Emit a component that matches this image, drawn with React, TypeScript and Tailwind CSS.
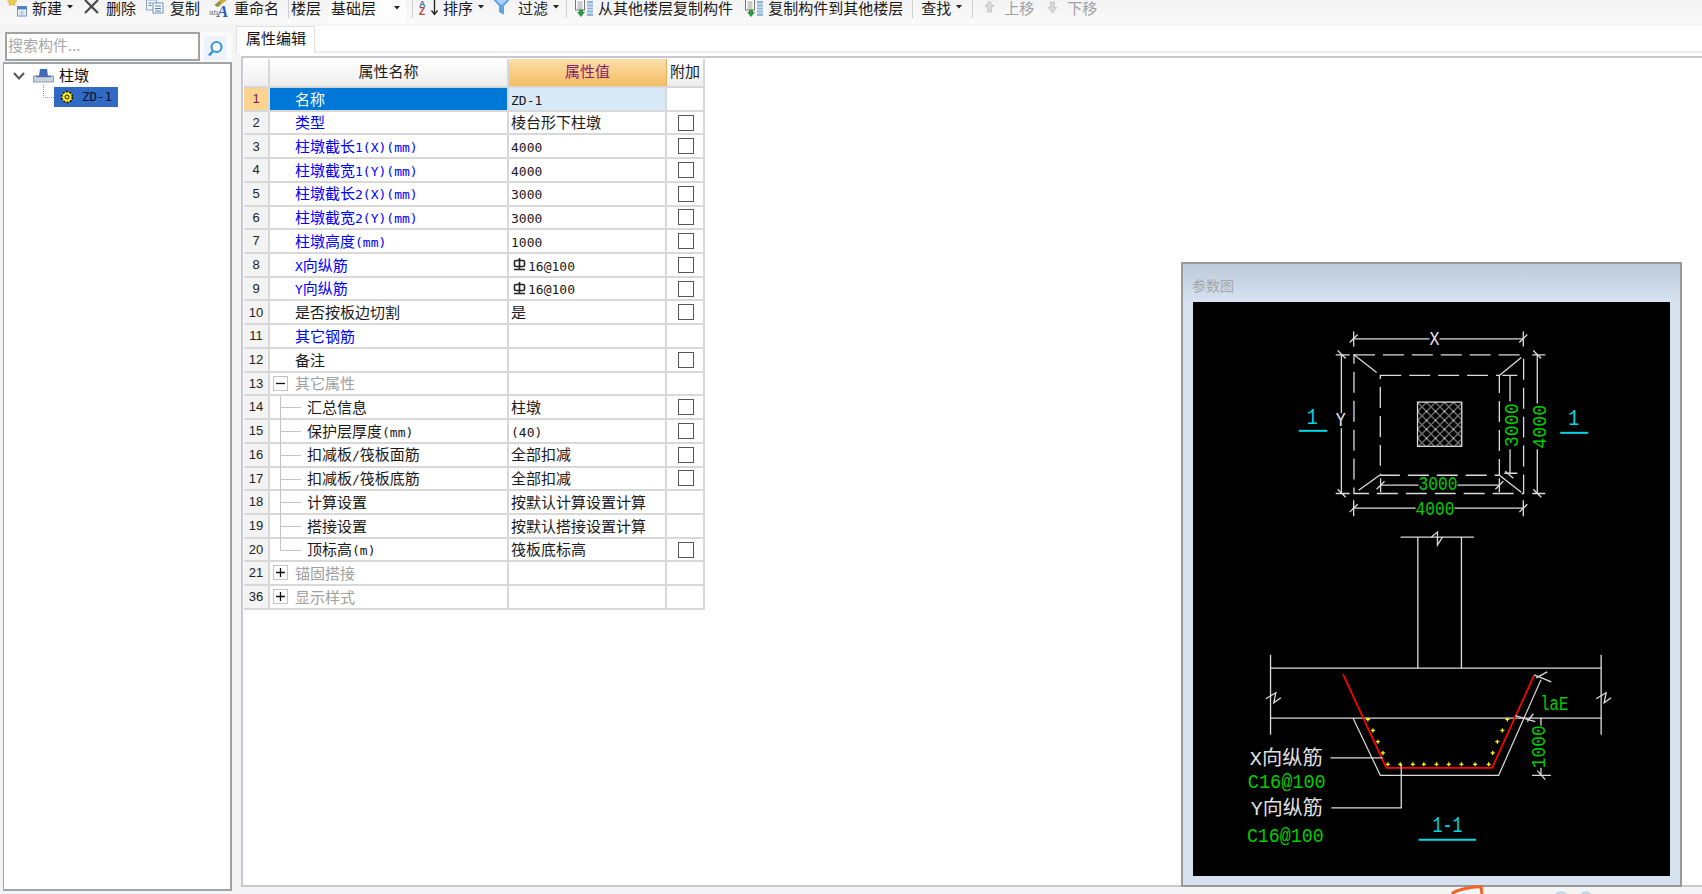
import type { ReactNode } from "react";

const cjk = "[font-family:'Noto_Sans_CJK_SC',sans-serif]";

// half-width runs are set in a mono face so they take 7.5px per char like the CAD software's font
function Mixed({ text }: { text: string }) {
  const parts = text.match(/[\x20-\x7e]+|[^\x20-\x7e]+/g) ?? [];
  return (
    <>
      {parts.map((part, i) =>
        /^[\x20-\x7e]/.test(part) ? (
          <span key={i} className="[font-family:'DejaVu_Sans_Mono',monospace] text-[13px]">
            {part}
          </span>
        ) : (
          <span key={i}>{part}</span>
        ),
      )}
    </>
  );
}

function Caret() {
  return (
    <svg width="6" height="4" viewBox="0 0 6 4" className="ml-[5px] mt-[5px]">
      <polygon points="0,0 6,0 3,3.5" fill="#222" />
    </svg>
  );
}

function Sep({ className }: { className: string }) {
  return <div className={`w-px h-[18px] bg-[#d0d0d0] ${className}`} />;
}

function Tool({
  icon,
  label,
  caret,
  muted,
  className = "",
}: {
  icon?: ReactNode;
  label: string;
  caret?: boolean;
  muted?: boolean;
  className?: string;
}) {
  return (
    <div className={`flex items-start shrink-0 ${className}`}>
      {icon}
      <span className={`${icon ? "ml-[5px]" : ""} ${muted ? "text-[#a0a0a0]" : "text-[#1a1a1a]"}`}>{label}</span>
      {caret && <Caret />}
    </div>
  );
}

function NewIcon() {
  return (
    <svg width="20" height="17" viewBox="0 0 20 17">
      <polygon points="5,-2 6.5,0.5 10,1 7.5,3 8,5.5 5,4.2 2,5.5 2.5,3 0.5,1 3.5,0.5" fill="#f2cf3c" stroke="#b89a22" strokeWidth="0.5" />
      <rect x="10.5" y="6.5" width="9" height="9.5" fill="#fff" stroke="#6b8fc0" />
      <rect x="10.5" y="6.5" width="9" height="3" fill="#4d7fc4" />
      <path d="M12 12h6M12 14h6M15 10v6" stroke="#9db7d8" />
    </svg>
  );
}

function DeleteIcon() {
  return (
    <svg width="18" height="15" viewBox="0 0 18 15">
      <path d="M2 0 15 13M15 0 2 13" stroke="#4a4a4a" strokeWidth="2.2" />
    </svg>
  );
}

function CopyIcon() {
  return (
    <svg width="19" height="15" viewBox="0 0 19 15">
      <rect x="0.5" y="0" width="10" height="10" fill="#f2f5fa" stroke="#8fa3bf" />
      <rect x="7" y="3" width="10" height="10" fill="#fff" stroke="#6f8fb8" />
      <path d="M9 6h6M9 8.5h6M9 11h6M2.5 3h3M2.5 5.5h3" stroke="#3f7fc0" />
    </svg>
  );
}

function RenameIcon() {
  return (
    <svg width="20" height="17" viewBox="0 0 20 17">
      <polygon points="5,5 11,0 18,0 14,3 10,7" fill="#d2a948" />
      <polygon points="6,5 11,1 12,3 8,7" fill="#6f9a52" />
      <text x="0" y="15" fontSize="8" fill="#777" fontFamily="Liberation Sans, sans-serif">ab</text>
      <text x="8" y="16.5" fontSize="17" fontWeight="700" fontStyle="italic" fill="#2f5fb8" fontFamily="Liberation Serif, serif">A</text>
    </svg>
  );
}

function SortIcon() {
  return (
    <svg width="20" height="16" viewBox="0 0 20 16">
      <text x="1" y="6.5" fontSize="9" fontWeight="700" fill="#3f6fb5" fontFamily="Liberation Sans, sans-serif">A</text>
      <text x="1" y="15" fontSize="10" fontWeight="700" fill="#b5473f" fontFamily="Liberation Sans, sans-serif">Z</text>
      <path d="M16.5 0v14M13.5 10.5l3 4 3-4" stroke="#222" strokeWidth="1.3" fill="none" />
    </svg>
  );
}

function FunnelIcon() {
  return (
    <svg width="20" height="15" viewBox="0 0 20 15">
      <polygon points="0,-1 17,-1 10.5,6 10.5,14 6.5,12 6.5,6" fill="#5ea6e6" stroke="#3c83c9" strokeWidth="0.6" />
      <polygon points="3,0 14,0 9.5,4.5 7.5,4.5" fill="#a6d2f5" />
    </svg>
  );
}

function FloorCopyIcon() {
  return (
    <svg width="20" height="18" viewBox="0 0 20 18">
      <rect x="2.5" y="-1" width="9" height="11" fill="#fff" stroke="#777" />
      <path d="M4.5 2h5M4.5 4h5M4.5 6h5M4.5 8h5" stroke="#999" />
      <rect x="14" y="1" width="6" height="15" fill="#8fb4da" />
      <path d="M14 4h6M14 7h6M14 10h6M14 13h6" stroke="#eef4fa" />
      <polygon points="6,9.5 10,9.5 10,12 12,12 8,17 4,12 6,12" fill="#2f9a3f" />
    </svg>
  );
}

function MoveIcon({ down }: { down?: boolean }) {
  return (
    <svg width="19" height="14" viewBox="0 0 19 14" className={down ? "rotate-180" : ""}>
      <polygon points="9.5,1 14,6.5 11.5,6.5 11.5,12 7.5,12 7.5,6.5 5,6.5" fill="#d8d8d8" stroke="#bdbdbd" strokeWidth="0.7" />
    </svg>
  );
}

function Toolbar() {
  return (
    <div className="flex items-start h-[24px] shrink-0 pl-[7px] text-[15px] leading-[15px] bg-gradient-to-b from-[#f3f3f3] to-[#fafafa]">
      <Tool icon={<NewIcon />} label="新建" caret />
      <Tool icon={<DeleteIcon />} label="删除" className="ml-[10px]" />
      <Tool icon={<CopyIcon />} label="复制" className="ml-[10px]" />
      <Tool icon={<RenameIcon />} label="重命名" className="ml-[9px]" />
      <Sep className="ml-[9px]" />
      <Tool label="楼层" className="ml-[2px]" />
      <div className="flex items-start justify-between w-[77px] h-[23px] ml-[8px] pl-[2px] pr-[6px] bg-[#fdfdfd] text-[#1a1a1a]">
        <span>基础层</span>
        <svg width="6" height="4" viewBox="0 0 6 4" className="mt-[6px]">
          <polygon points="0,0 6,0 3,3.5" fill="#222" />
        </svg>
      </div>
      <Sep className="ml-[6px]" />
      <Tool icon={<SortIcon />} label="排序" caret className="ml-[5px]" />
      <Tool icon={<FunnelIcon />} label="过滤" caret className="ml-[9px]" />
      <Sep className="ml-[7px]" />
      <Tool icon={<FloorCopyIcon />} label="从其他楼层复制构件" className="ml-[6px]" />
      <Tool icon={<FloorCopyIcon />} label="复制构件到其他楼层" className="ml-[10px]" />
      <Sep className="ml-[9px]" />
      <Tool label="查找" caret className="ml-[8px]" />
      <Sep className="ml-[10px]" />
      <Tool icon={<MoveIcon />} label="上移" muted className="ml-[7px]" />
      <Tool icon={<MoveIcon down />} label="下移" muted className="ml-[9px]" />
    </div>
  );
}

function TreePanel() {
  return (
    <div className="flex flex-col w-[229px] ml-[3px] shrink-0">
      <div className="flex h-[30px] mt-[8px] bg-[#fafafa]">
        <div className="w-[195px] ml-[2px] h-[29px] border-2 border-[#a2a2a2] bg-white pl-[1px] leading-[22px] text-[#a8a8a8]">
          搜索构件...
        </div>
        <div className="flex items-center justify-center w-[22px] h-[24px] mt-[4px] ml-[4px] bg-[#edf3f9]">
          <svg width="17" height="17" viewBox="0 0 17 17">
            <circle cx="9.5" cy="7" r="5" fill="#fff" stroke="#3a96dc" strokeWidth="2.2" />
            <path d="M6 11 2 15.5" stroke="#3a96dc" strokeWidth="2.6" />
          </svg>
        </div>
      </div>
      <div className="relative h-[829px] border-2 border-l border-[#9ea3a8] bg-white">
        <div className="flex items-center h-[21px] mt-[1px] pl-[9px]">
          <svg width="12" height="8" viewBox="0 0 12 8">
            <path d="M1 1 6 6.5 11 1" fill="none" stroke="#555" strokeWidth="2" />
          </svg>
          <svg width="21" height="16" viewBox="0 0 21 16" className="ml-[8px]">
            <polygon points="7,1 14,1 15,8 6,8" fill="#3f68b5" />
            <rect x="0.5" y="8" width="20" height="6" fill="#c9d3e0" stroke="#889" strokeWidth="0.8" />
            <path d="M3 8.5h15" stroke="#3f68b5" strokeWidth="1.4" />
          </svg>
          <span className="ml-[5px] text-[#111]">柱墩</span>
        </div>
        <svg width="12" height="14" viewBox="0 0 12 14" className="absolute left-[39px] top-[21px]">
          <path d="M0.5 0v12.5H12" fill="none" stroke="#999" strokeDasharray="1 1" />
        </svg>
        <div className="flex items-center w-[64px] h-[20px] mt-[1px] ml-[50px] pl-[6px] bg-[#316ac5]">
          <svg width="14" height="14" viewBox="0 0 14 14">
            <circle cx="7" cy="7" r="5.4" fill="#f7ea1f" stroke="#111" strokeWidth="1.6" strokeDasharray="2 1.4" />
            <circle cx="7" cy="7" r="2" fill="#f7ea1f" stroke="#222" />
          </svg>
          <span className="ml-[8px] [font-family:'DejaVu_Sans_Mono',monospace] text-[12.5px] leading-none text-[#04102c]">ZD-1</span>
        </div>
      </div>
    </div>
  );
}

type Row = {
  n: number;
  name: string;
  value?: string;
  check?: boolean;
  tone?: "blue" | "black" | "gray";
  child?: boolean;
  last?: boolean;
  fold?: "+" | "-";
  rebar?: boolean;
};

const rows: Row[] = [
  { n: 1, name: "名称", value: "ZD-1" },
  { n: 2, name: "类型", value: "棱台形下柱墩", check: true, tone: "blue" },
  { n: 3, name: "柱墩截长1(X)(mm)", value: "4000", check: true, tone: "blue" },
  { n: 4, name: "柱墩截宽1(Y)(mm)", value: "4000", check: true, tone: "blue" },
  { n: 5, name: "柱墩截长2(X)(mm)", value: "3000", check: true, tone: "blue" },
  { n: 6, name: "柱墩截宽2(Y)(mm)", value: "3000", check: true, tone: "blue" },
  { n: 7, name: "柱墩高度(mm)", value: "1000", check: true, tone: "blue" },
  { n: 8, name: "X向纵筋", value: "16@100", rebar: true, check: true, tone: "blue" },
  { n: 9, name: "Y向纵筋", value: "16@100", rebar: true, check: true, tone: "blue" },
  { n: 10, name: "是否按板边切割", value: "是", check: true },
  { n: 11, name: "其它钢筋", tone: "blue" },
  { n: 12, name: "备注", check: true },
  { n: 13, name: "其它属性", tone: "gray", fold: "-" },
  { n: 14, name: "汇总信息", value: "柱墩", check: true, child: true },
  { n: 15, name: "保护层厚度(mm)", value: "(40)", check: true, child: true },
  { n: 16, name: "扣减板/筏板面筋", value: "全部扣减", check: true, child: true },
  { n: 17, name: "扣减板/筏板底筋", value: "全部扣减", check: true, child: true },
  { n: 18, name: "计算设置", value: "按默认计算设置计算", child: true },
  { n: 19, name: "搭接设置", value: "按默认搭接设置计算", child: true },
  { n: 20, name: "顶标高(m)", value: "筏板底标高", check: true, child: true, last: true },
  { n: 21, name: "锚固搭接", tone: "gray", fold: "+" },
  { n: 36, name: "显示样式", tone: "gray", fold: "+" },
];

function RebarMark() {
  return (
    <svg width="13" height="13" viewBox="0 0 13 13" className="ml-[2px] mr-[2px]">
      <rect x="1.5" y="2.5" width="10" height="6" rx="1.5" fill="none" stroke="#222" strokeWidth="1.6" />
      <path d="M6.5 0V12M1 11.5h11" stroke="#222" strokeWidth="1.6" />
    </svg>
  );
}

function PropRow({ row }: { row: Row }) {
  const selected = row.n === 1;
  const tone = selected
    ? "text-white"
    : row.tone === "blue"
      ? "text-[#0000ff]"
      : row.tone === "gray"
        ? "text-[#a0a0a0]"
        : "text-[#1a1a1a]";
  return (
    <div className="flex h-[23.73px] border-b-2 border-[#d8d8d8]">
      <div
        className={`flex items-center justify-center w-[26px] border-r-2 border-[#d8d8d8] [font-family:'Liberation_Sans',sans-serif] text-[13px] ${
          selected ? "bg-[#fdd48f] text-[#7a1a5a]" : "bg-[#f3f3f3] text-[#222]"
        }`}
      >
        {row.n}
      </div>
      <div
        className={`relative flex items-center w-[239px] border-r-2 border-[#d8d8d8] ${
          selected ? "bg-[#0078d7]" : ""
        } ${row.child ? "pl-[37px]" : "pl-[25px]"} ${tone}`}
      >
        {row.fold && (
          <div className="absolute left-[3px] top-[3px] flex items-center justify-center w-[15px] h-[15px] border border-[#c4c4c4] bg-white">
            <svg width="9" height="9" viewBox="0 0 9 9">
              <path d={row.fold === "+" ? "M0 4.5h9M4.5 0v9" : "M0 4.5h9"} stroke="#111" strokeWidth="1.3" />
            </svg>
          </div>
        )}
        {row.child && (
          <div className={`absolute left-[10px] top-0 w-px bg-[#c4c4c4] ${row.last ? "h-[12px]" : "h-[24px]"}`} />
        )}
        {row.child && <div className="absolute left-[11px] top-[11px] h-px w-[20px] bg-[#c4c4c4]" />}
        <span className="whitespace-nowrap">
          <Mixed text={row.name} />
        </span>
      </div>
      <div
        className={`flex items-center w-[158px] border-r-2 border-[#d8d8d8] pl-[2px] text-[#1a1a1a] ${
          selected ? "bg-[#d8e9f8]" : ""
        }`}
      >
        {row.rebar && <RebarMark />}
        {row.value && (
          <span className="whitespace-nowrap">
            <Mixed text={row.value} />
          </span>
        )}
      </div>
      <div className="flex items-center justify-center w-[38px] border-r-2 border-[#d8d8d8] pl-[2px]">
        {row.check && <div className="w-[16px] h-[16px] border-[1.5px] border-[#555] bg-white" />}
      </div>
    </div>
  );
}

function PropTable() {
  return (
    <div className="w-[461px]">
      <div className="flex h-[29px] border-b-2 border-[#d8d8d8]">
        <div className="w-[26px] border-r-2 border-[#d8d8d8] bg-gradient-to-b from-white to-[#eeeeee]" />
        <div className="flex items-center justify-center w-[239px] pb-[2px] border-r-2 border-[#d8d8d8] bg-gradient-to-b from-white to-[#eeeeee] text-[#1a1a1a]">
          属性名称
        </div>
        <div className="flex items-center justify-center w-[158px] pb-[2px] border-r border-[#e0b060] bg-gradient-to-b from-[#fbdfa8] to-[#f3bd62] text-[#8a1c6e]">
          属性值
        </div>
        <div className="flex items-center justify-center w-[38px] pb-[2px] border-r-2 border-[#d8d8d8] bg-gradient-to-b from-white to-[#eeeeee] text-[#1a1a1a]">
          附加
        </div>
      </div>
      {rows.map((row) => (
        <PropRow key={row.n} row={row} />
      ))}
    </div>
  );
}

const line = "#dcdcdc";
const green = "#00cc00";
const cyan = "#00d8e8";
const monoFont = "Liberation Mono, Noto Sans CJK SC, monospace";

function Ln({ d, color = line, w = 1.3 }: { d: string; color?: string; w?: number }) {
  return <path d={d} stroke={color} strokeWidth={w} fill="none" />;
}

function Label({
  x,
  y,
  len,
  children,
  color = green,
  size = 20,
  rotate,
}: {
  x: number;
  y: number;
  len: number;
  children: string;
  color?: string;
  size?: number;
  rotate?: [number, number];
}) {
  return (
    <text
      x={x}
      y={y}
      fill={color}
      fontSize={size}
      fontFamily={monoFont}
      textLength={len}
      lengthAdjust="spacingAndGlyphs"
      transform={rotate ? `rotate(-90 ${rotate[0]} ${rotate[1]})` : undefined}
    >
      {children}
    </text>
  );
}

const rebarDots = [
  [1368.3, 719.7], [1373.3, 730.7], [1378.3, 742], [1383.3, 753.3], [1388.3, 764.7],
  [1400.7, 764.7], [1413.3, 764.7], [1424.3, 764.7], [1437, 764.7], [1449.3, 764.7],
  [1462, 764.7], [1475.7, 764.7], [1489.3, 764.7], [1493.3, 753.3], [1498, 742],
  [1503, 730.7], [1508, 719.7],
];

function ParamDrawing() {
  return (
    <svg viewBox="1193 302 478 574" className="w-full h-full bg-black">
      <defs>
        <pattern id="hatch" width="9" height="9" patternUnits="userSpaceOnUse" x="1418" y="402">
          <path d="M0 0 9 9M9 0 0 9" stroke="#dcdcdc" strokeWidth="1" />
        </pattern>
      </defs>

      {/* plan view */}
      <rect x="1354.3" y="354.3" width="170" height="139" fill="none" stroke={line} strokeWidth="1.3" strokeDasharray="21 8" />
      <rect x="1380.7" y="375" width="119.3" height="100" fill="none" stroke={line} strokeWidth="1.3" strokeDasharray="21 8" />
      <rect x="1418" y="401.7" width="44.3" height="44.3" fill="url(#hatch)" stroke={line} strokeWidth="1.3" />
      <Ln d="M1354 354 1377 372M1522 357 1500 375M1359 490 1380 475M1500 475 1522 492" />

      <Ln d="M1354 338.3H1430M1440 338.3H1524" />
      <Ln d="M1354 331V346M1524 331V346M1350 342 1358 334M1520 342 1528 334" />
      <Label x={1430} y={345} len={10} color="#e8e8e8">X</Label>

      <Ln d="M1341.7 354V413M1341.7 428V493" />
      <Ln d="M1336 354.3H1350M1336 493.3H1350M1338 350 1346 358M1338 489 1346 497" />
      <Label x={1336} y={426} len={10} color="#e8e8e8">Y</Label>

      <Ln d="M1538 354V403M1538 449V493" />
      <Ln d="M1533 354.3H1546M1533 493.3H1546M1534 350 1542 358M1534 489 1542 497" />
      <Label x={1519.5} y={432} len={44} rotate={[1541.5, 426.5]}>4000</Label>

      <Ln d="M1510.7 375V401M1510.7 449V473" />
      <Ln d="M1503 375H1518M1505 473H1518M1506 471 1514 478" />
      <Label x={1491} y={431} len={44} rotate={[1513, 425]}>3000</Label>

      <Ln d="M1381 485H1419M1458 485H1500" />
      <Ln d="M1381 478V492M1500 478V492M1377 489 1385 481M1496 489 1504 481" />
      <Label x={1419} y={490} len={39}>3000</Label>

      <Ln d="M1354 508H1416M1455 508H1524" />
      <Ln d="M1354 500V516M1524 500V516M1350 512 1358 504M1520 512 1528 504" />
      <Label x={1416} y={515} len={39}>4000</Label>

      {/* section marks */}
      <Ln d="M1299 430.5H1327.5" color={cyan} w={2} />
      <Ln d="M1561 432.5H1589" color={cyan} w={2} />
      <Label x={1307} y={424} len={11} color={cyan} size={22}>1</Label>
      <Label x={1569} y={425} len={11} color={cyan} size={22}>1</Label>

      {/* section view */}
      <Ln d="M1401 537H1474.5M1418.3 537V668.3M1462 537V668.3" />
      <Ln d="M1432 537 1438 532 1438 545 1443 537" />
      <Ln d="M1270.7 668.3H1602M1270.7 718.3H1602M1270.7 655V735M1602 655V735" />
      <Ln d="M1266 699 1276 693 1274 703 1281 698M1597 699 1607 693 1605 703 1612 698" />
      <Ln d="M1353.3 718.3 1380.7 775.7H1499.3L1541.7 680" w={1.2} />
      <Ln d="M1343.3 674.3 1386.7 768.3H1492.7L1535 675" color="#ff0000" w={1.8} />
      {rebarDots.map(([x, y]) => (
        <Ln key={`${x}-${y}`} d={`M${x - 2} ${y}H${x + 2}M${x} ${y - 2}V${y + 2}`} color="#ffff00" />
      ))}
      <Ln d="M1535 675 1552 682M1537 678 1548 672M1516 716 1536 722M1528 722 1534 714" />
      <Ln d="M1541.7 718V726M1541.7 768V775.7M1532.7 775.7H1551.7M1538 771 1546 780" />
      <Label x={1541} y={710.7} len={28}>laE</Label>
      <Label x={1518.5} y={753} len={43} rotate={[1540, 747]}>1000</Label>

      <Ln d="M1330.7 758.3H1383" />
      <Ln d="M1331.7 808.3H1401.7V764.7" />
      <Label x={1250} y={765} len={73} color="#e0e0e0">X向纵筋</Label>
      <Label x={1248} y={788} len={78} size={21}>C16@100</Label>
      <Label x={1251} y={815} len={72} color="#e0e0e0">Y向纵筋</Label>
      <Label x={1247} y={842.7} len={77} size={21}>C16@100</Label>
      <Label x={1433} y={832.7} len={30} color={cyan} size={22}>1-1</Label>
      <Ln d="M1419 840.3H1476.7" color={cyan} w={2} />
    </svg>
  );
}

export default function App() {
  return (
    <div className={`relative flex flex-col w-[1702px] h-[894px] overflow-hidden bg-[#f4f4f4] text-[15px] ${cjk}`}>
      <Toolbar />
      <div className="flex flex-1 min-h-0">
        <TreePanel />
        <div className="flex flex-col flex-1 ml-[4px] pt-[2px]">
          <div className="flex h-[27px]">
            <div className="w-[79px] pl-[9px] bg-white border-t border-l border-r border-[#e0e0e0] text-[#111]">
              属性编辑
            </div>
            <div className="flex-1 bg-white border-b-2 border-[#ececec]" />
          </div>
          <div className="ml-[5px] pt-[3px] bg-white">
            <div className="relative h-[831px] border-y-2 border-l-2 border-[#c8c8d0] bg-white pl-px pt-px">
              <PropTable />
              <div className="absolute left-[938px] top-[204px] flex flex-col w-[501px] h-[625px] border-2 border-[#9a9a9a] bg-[#d6e2f0]">
                <div className="h-[38px] shrink-0 pl-[9px] pt-[11px] leading-[20px] text-[14px] text-[#a6a6a6] bg-gradient-to-b from-[#bccbdb] to-[#d6e2f0]">
                  参数图
                </div>
                <div className="flex-1 min-h-0 pl-[10px] pr-[10px] pb-[9px]">
                  <ParamDrawing />
                </div>
              </div>
            </div>
          </div>
        </div>
      </div>
      {/* the edge of a hand-drawn mark and window icons peeking in at the bottom */}
      <svg width="160" height="9" viewBox="0 0 160 9" className="absolute left-[1450px] top-[885px]">
        <path d="M2 9C5 5 20 2 31 1.5L32 9" fill="none" stroke="#f0642c" strokeWidth="3" />
        <path d="M106 9C109 7 113 7 116 9M132 9C134 7 137 7 140 9" fill="none" stroke="#bcd4ea" strokeWidth="2" />
      </svg>
    </div>
  );
}
